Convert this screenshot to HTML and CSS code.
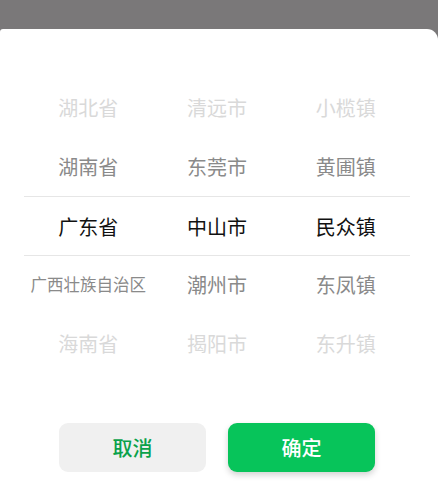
FILE: index.html
```html
<!DOCTYPE html>
<html lang="zh-CN">
<head>
  <meta charset="UTF-8">
  <title>选择地区</title>
  <link rel="stylesheet" href="styles.css">
</head>
<body>
  <div class="mask"></div>
  <div class="sheet">
    <div class="picker">
      <div class="indicator"></div>
      <div class="column">
        <div class="item far">湖北省</div>
        <div class="item near">湖南省</div>
        <div class="item active">广东省</div>
        <div class="item near small">广西壮族自治区</div>
        <div class="item far">海南省</div>
      </div>
      <div class="column">
        <div class="item far">清远市</div>
        <div class="item near">东莞市</div>
        <div class="item active">中山市</div>
        <div class="item near">潮州市</div>
        <div class="item far">揭阳市</div>
      </div>
      <div class="column">
        <div class="item far">小榄镇</div>
        <div class="item near">黄圃镇</div>
        <div class="item active">民众镇</div>
        <div class="item near">东凤镇</div>
        <div class="item far">东升镇</div>
      </div>
    </div>
    <div class="actions">
      <button class="btn btn-cancel">取消</button>
      <button class="btn btn-ok">确定</button>
    </div>
  </div>
</body>
</html>
```

FILE: styles.css
```css
html, body {
  margin: 0;
  height: 100%;
}

body {
  background: #7a7879;
  font-family: "Noto Sans CJK SC", "Noto Sans", sans-serif;
  display: flex;
  flex-direction: column;
}

.mask {
  height: 29px;
  flex-shrink: 0;
}

.sheet {
  flex: 1;
  background: #fff;
  border-radius: 3px 11px 0 0;
  padding: 49px 28px 0 24px;
}

.picker {
  position: relative;
  display: grid;
  grid-template-columns: repeat(3, 1fr);
}

.indicator {
  position: absolute;
  left: 0;
  right: 0;
  top: 118px;
  height: 60px;
  border-top: 1px solid #e6e6e6;
  border-bottom: 1px solid #e6e6e6;
  box-sizing: border-box;
}

.column {
  display: flex;
  flex-direction: column;
}

.item {
  height: 59px;
  line-height: 59px;
  text-align: center;
  font-size: 20px;
  white-space: nowrap;
}

.item.far {
  color: #d9d9d9;
}

.item.near {
  color: #8a8a8a;
}

.item.active {
  color: #111;
  line-height: 61px;
}

.item.small {
  font-size: 16.5px;
}

.actions {
  display: flex;
  justify-content: center;
  gap: 22px;
  margin-top: 50px;
}

.btn {
  width: 147px;
  height: 49px;
  border: none;
  border-radius: 9px;
  font-family: inherit;
  font-size: 20px;
  font-weight: 500;
}

.btn-cancel {
  background: #f0f0f0;
  color: #0aa14a;
}

.btn-ok {
  background: #07c45a;
  color: #fff;
  box-shadow: 0 3px 6px rgba(0, 0, 0, 0.18);
}
```
